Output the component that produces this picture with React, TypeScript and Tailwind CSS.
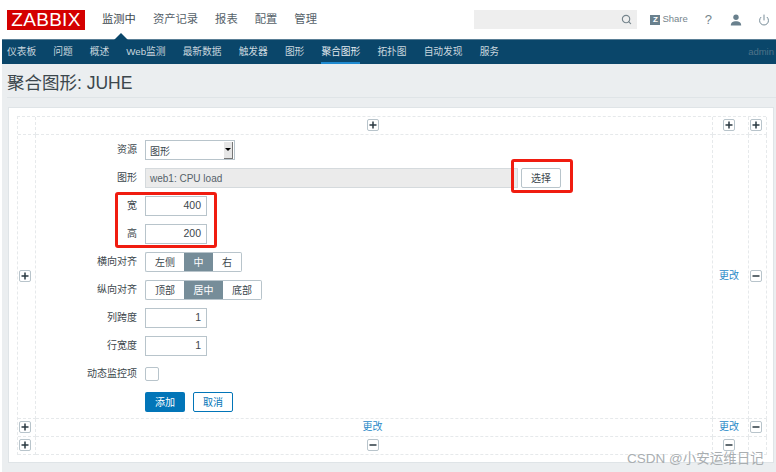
import { Power, Search } from 'lucide-react';

const mainNav = [
    { label: '监测中', active: true },
    { label: '资产记录' },
    { label: '报表' },
    { label: '配置' },
    { label: '管理' },
];

const subNav = ['仪表板', '问题', '概述', 'Web监测', '最新数据', '触发器', '图形', '聚合图形', '拓扑图', '自动发现', '服务'];

function PlusButton() {
    return (
        <button className="w-3 h-3 bg-white border border-[#b8c4cb] rounded-[2px] flex items-center justify-center">
            <svg width="8" height="8" viewBox="0 0 8 8">
                <path d="M4 0.5V7.5M0.5 4H7.5" stroke="#2b3a42" strokeWidth="1.5" />
            </svg>
        </button>
    );
}

function MinusButton() {
    return (
        <button className="w-3 h-3 bg-white border border-[#b8c4cb] rounded-[2px] flex items-center justify-center">
            <svg width="8" height="8" viewBox="0 0 8 8">
                <path d="M0.5 4H7.5" stroke="#2b3a42" strokeWidth="1.5" />
            </svg>
        </button>
    );
}

function Label({ text }: { text: string }) {
    return <div className="w-[101px] mr-2 -mt-[1px] text-right text-[#3c474d] text-[10px]">{text}</div>;
}

function NumberField({ value }: { value: string }) {
    return (
        <div className="w-[62px] h-5 border border-[#b8c4cb] bg-white px-[5px] flex items-center justify-end text-[10.5px] text-[#3c474d]">
            {value}
        </div>
    );
}

function Segmented({ items, activeIndex }: { items: string[]; activeIndex: number }) {
    return (
        <div className="flex">
            {items.map((item, i) => (
                <div
                    key={item}
                    className={`h-5 flex items-center justify-center text-[10px] border-y border-[#b8c4cb] ${
                        item.length === 1 ? 'w-[29px]' : 'w-[39px]'
                    } ${i === 0 ? 'border-l rounded-l-[2px]' : ''} ${
                        i === items.length - 1 ? 'border-r rounded-r-[2px]' : ''
                    } ${i === activeIndex ? 'bg-[#768d99] border-[#768d99] text-white' : 'bg-white text-[#3c474d]'}`}
                >
                    {item}
                </div>
            ))}
        </div>
    );
}

function FormRow({ label, children }: { label: string; children: React.ReactNode }) {
    return (
        <div className="flex items-center h-5">
            <Label text={label} />
            {children}
        </div>
    );
}

const cell = 'border-r border-b border-dashed border-[#e6e9eb] flex items-center justify-center pr-[3px] pb-[2px]';

export default function App() {
    return (
        <div
            className="w-[776px] h-[472px] overflow-hidden relative bg-white pl-[2px]"
            style={{ fontFamily: '"Liberation Sans", "Noto Sans CJK SC", sans-serif' }}
        >
            {/* Top Header */}
            <div className="h-[39px] flex items-center bg-white -ml-[2px]">
                <div className="ml-[7px] mt-[1px] w-[78px] h-5 bg-[#d40000] text-white text-[19px] leading-5 text-center tracking-[0.3px]">
                    ZABBIX
                </div>
                <div className="ml-[17px] flex gap-[17px] text-[11.3px] text-[#56626a]">
                    {mainNav.map((item) => (
                        <span key={item.label} className={item.active ? 'text-[#3c474d]' : ''}>
                            {item.label}
                        </span>
                    ))}
                </div>
                <div className="ml-auto mr-[5px] w-[163px] h-[19px] bg-[#eeeeee] flex items-center justify-end pr-[5px] -mt-[1px]">
                    <Search size={11} strokeWidth={2.5} className="text-[#76858d]" />
                </div>
                <div className="ml-[8px] w-[10px] h-[10px] bg-[#69808d] text-white text-[8px] font-bold leading-[10px] text-center">Z</div>
                <span className="ml-[2px] text-[9.5px] text-[#76858d]">Share</span>
                <span className="ml-[17px] text-[13px] text-[#76858d]">?</span>
                <svg className="ml-[18px]" width="12" height="12" viewBox="0 0 12 12" fill="#69808d">
                    <circle cx="6" cy="3.2" r="2.7" />
                    <path d="M0.8 11.5C0.8 8.6 3 7.3 6 7.3S11.2 8.6 11.2 11.5Z" />
                </svg>
                <Power size={12} strokeWidth={1.8} className="ml-[16px] mr-[6px] text-[#69808d]" />
            </div>

            {/* Sub Navigation */}
            <div className="relative h-[25px] bg-[#0a466a] border-t border-[#5a7f96] flex items-center pl-[5px] text-[9.75px] text-[#c9d6de]">
                <div className="absolute left-[112px] -top-[7px] w-0 h-0 border-x-[7px] border-x-transparent border-b-[7px] border-b-[#0a466a]" />
                <div className="flex gap-[17px] h-full">
                    {subNav.map((item) => (
                        <div
                            key={item}
                            className={`h-full flex items-center ${
                                item === '聚合图形' ? 'border-b-2 border-[#1f8ad0] pt-[2px] text-[#e3eaef]' : ''
                            }`}
                        >
                            {item}
                        </div>
                    ))}
                </div>
                <span className="ml-auto mr-[2px] text-[#4f7389] text-[9.5px]">admin</span>
            </div>

            {/* Page Body */}
            <div className="h-[408px] bg-[#ebeef0] pl-[5px] pr-[2px]">
                <div className="h-[34px] pt-[6px] flex items-center border-b border-[#dfe4e7] text-[17.5px] text-[#3c474d] -mr-[2px] pr-[2px]">
                    聚合图形: JUHE
                </div>
                <div className="mt-[9px] ml-[1px] h-[356px] bg-white border border-[#dfe4e7] pt-2 pl-2">
                    <div className="grid grid-cols-[18px_677px_36px_18px] grid-rows-[18px_284px_18px_18px] w-[749px] border-l border-t border-dashed border-[#e6e9eb]">
                        {/* Row 1 */}
                        <div className={cell} />
                        <div className={cell}>
                            <PlusButton />
                        </div>
                        <div className={cell}>
                            <PlusButton />
                        </div>
                        <div className={cell}>
                            <PlusButton />
                        </div>

                        {/* Row 2 */}
                        <div className={cell}>
                            <PlusButton />
                        </div>
                        <div className="border-r border-b border-dashed border-[#e6e9eb] pt-[5px] flex flex-col gap-2">
                            <FormRow label="资源">
                                <div className="w-[90px] h-5 border border-[#b8c4cb] bg-white pl-1 pt-[1px] flex items-center justify-between text-[10px] text-[#3c474d]">
                                    <span className="mt-[1px]">图形</span>
                                    <div className="w-[9px] h-[17px] mr-[1px] -mt-[1px] bg-[#e6e6e6] border-r border-b border-[#777] flex flex-col items-center justify-center gap-[1px]">
                                        <div className="w-0 h-0 border-x-[3px] border-x-transparent border-t-[3px] border-t-black" />
                                    </div>
                                </div>
                            </FormRow>
                            <FormRow label="图形">
                                <div className="w-[373px] h-5 border border-[#d5dadd] bg-[#ebebeb] px-[4px] flex items-center text-[10px] text-[#56626a]">
                                    web1: CPU load
                                </div>
                                <button className="ml-[3px] w-[40px] h-5 border border-[#b8c4cb] rounded-[2px] bg-white text-[10px] text-[#3c474d]">
                                    选择
                                </button>
                            </FormRow>
                            <FormRow label="宽">
                                <NumberField value="400" />
                            </FormRow>
                            <FormRow label="高">
                                <NumberField value="200" />
                            </FormRow>
                            <FormRow label="横向对齐">
                                <Segmented items={['左侧', '中', '右']} activeIndex={1} />
                            </FormRow>
                            <FormRow label="纵向对齐">
                                <Segmented items={['顶部', '居中', '底部']} activeIndex={1} />
                            </FormRow>
                            <FormRow label="列跨度">
                                <NumberField value="1" />
                            </FormRow>
                            <FormRow label="行宽度">
                                <NumberField value="1" />
                            </FormRow>
                            <FormRow label="动态监控项">
                                <div className="w-[14px] h-[14px] -mt-[1px] border border-[#b8c4cb] rounded-[2px] bg-white" />
                            </FormRow>
                            <FormRow label="">
                                <button className="w-[40px] h-5 rounded-[2px] bg-[#0275b8] text-white text-[10px]">添加</button>
                                <button className="ml-2 w-[40px] h-5 rounded-[2px] border border-[#0275b8] bg-white text-[#0275b8] text-[10px]">
                                    取消
                                </button>
                            </FormRow>
                        </div>
                        <div className={`${cell} text-[10px] text-[#2b8ac8]`}>更改</div>
                        <div className={cell}>
                            <MinusButton />
                        </div>

                        {/* Row 3 */}
                        <div className={cell}>
                            <PlusButton />
                        </div>
                        <div className={`${cell} text-[10px] text-[#2b8ac8]`}>更改</div>
                        <div className={`${cell} text-[10px] text-[#2b8ac8]`}>更改</div>
                        <div className={cell}>
                            <MinusButton />
                        </div>

                        {/* Row 4 */}
                        <div className={cell}>
                            <PlusButton />
                        </div>
                        <div className={cell}>
                            <MinusButton />
                        </div>
                        <div className={cell}>
                            <MinusButton />
                        </div>
                        <div className={cell} />
                    </div>
                </div>
            </div>

            {/* Red annotation boxes */}
            <div className="absolute left-[511px] top-[159px] w-[62px] h-[34px] border-[3px] border-[#f01c10] rounded-[3px]" />
            <div className="absolute left-[115px] top-[192px] w-[102px] h-[56px] border-[3px] border-[#f01c10] rounded-[3px]" />

            {/* Watermark */}
            <div className="absolute left-[627px] top-[449px] text-[13.5px] text-[#a9aeb1] whitespace-nowrap">CSDN @小安运维日记</div>
        </div>
    );
}
